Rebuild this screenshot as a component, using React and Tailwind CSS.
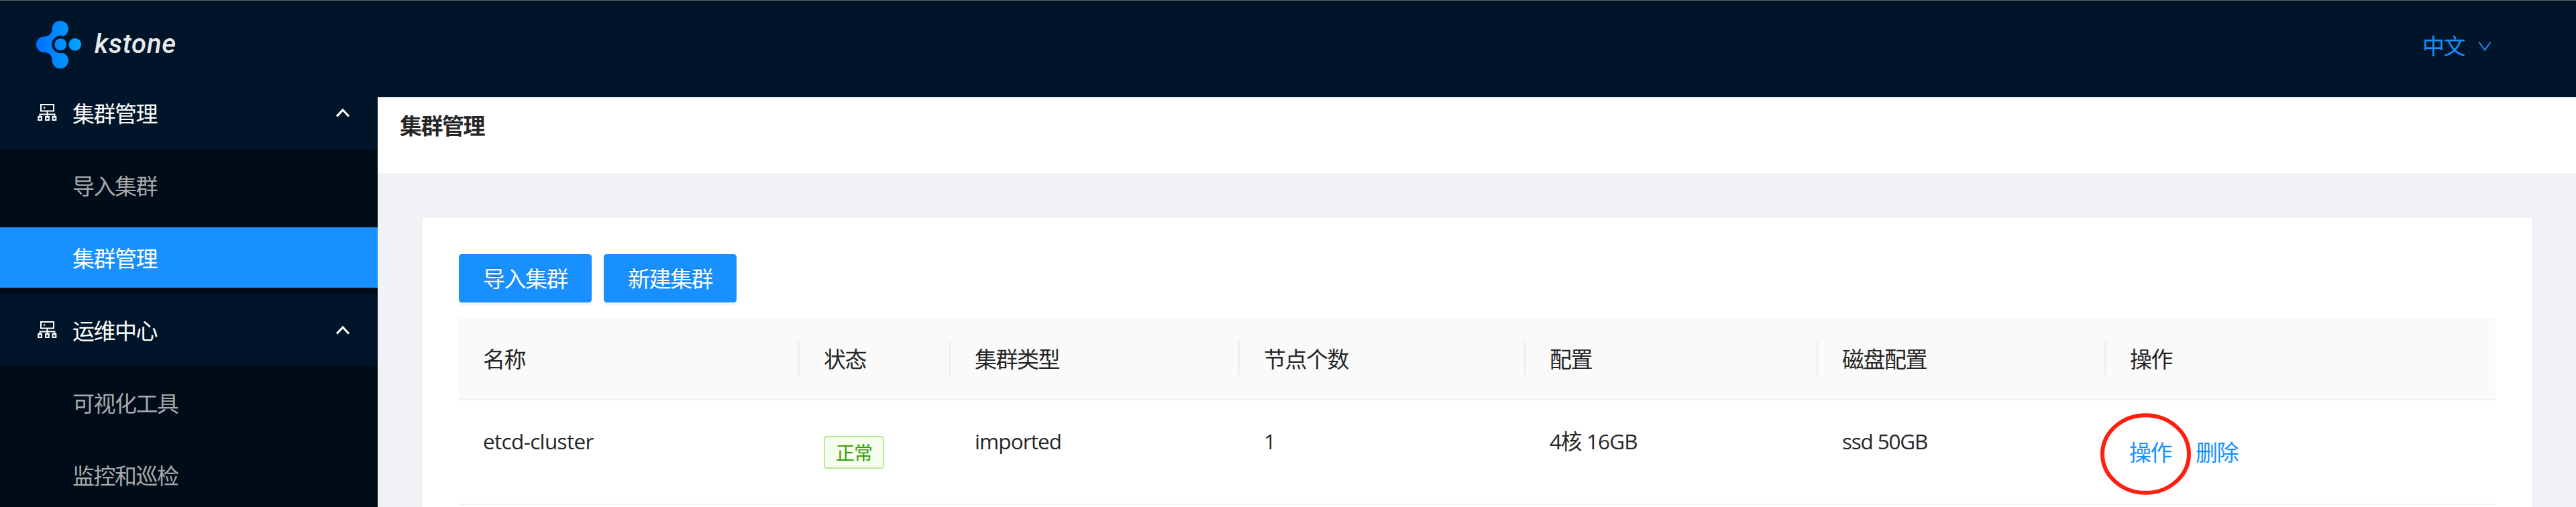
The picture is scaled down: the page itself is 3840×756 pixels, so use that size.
function Logo() {
  return (
    <div className="flex items-center">
      <svg width="72" height="74" viewBox="52 29 72 74">
        <defs>
          <linearGradient id="lg" gradientUnits="userSpaceOnUse" x1="53" y1="0" x2="122" y2="0">
            <stop offset="0" stopColor="#0070ff" />
            <stop offset="1" stopColor="#00a6ff" />
          </linearGradient>
          <mask id="ring">
            <rect x="50" y="29" width="74" height="74" fill="#fff" />
            <circle cx="90.3" cy="66.3" r="13" fill="#000" />
          </mask>
        </defs>
        <g fill="url(#lg)">
          <path
            mask="url(#ring)"
            d="M89.800 31a12 12 0 0 1 0 24Q87 55 90 66.300Q87 78 89.800 78.300a12 12 0 0 1 0 24c-7.500 0-12-5.500-12-13c0-6-4.500-11-12-11.200a11.800 11.800 0 0 1 0-23.600c7.500-.2 12-5.200 12-11.200c0-7 4.500-12.300 12-12.300z"
          />
          <circle cx="90.3" cy="66.3" r="9" />
          <circle cx="111.8" cy="66.3" r="9.300" />
        </g>
      </svg>
      <span className="ml-[17px] text-[40px] leading-none font-medium italic tracking-[0.8px] text-[#e9eaec] font-[Roboto,sans-serif]">
        kstone
      </span>
    </div>
  );
}

function ClusterIcon() {
  return (
    <svg width="32" height="32" viewBox="0 0 32 32" fill="none" stroke="currentColor" strokeWidth="2">
      <rect x="7" y="4" width="19" height="9.500" />
      <path d="M16.500 13.500V24M5.500 24V18.500H27.500V24" />
      <rect x="3.200" y="22" width="4.800" height="5" />
      <rect x="14.100" y="22" width="4.800" height="5" />
      <rect x="24.500" y="22" width="4.800" height="5" />
      <rect x="11" y="7.500" width="2.200" height="2.200" fill="currentColor" stroke="none" />
    </svg>
  );
}

function GroupTitle({ children, className }) {
  return (
    <div className={"flex items-center pl-[54px] pr-[41px] text-white " + className}>
      <ClusterIcon />
      <span className="ml-[22px] flex-1 pt-0.5">{children}</span>
      <svg width="22" height="14" viewBox="0 0 22 14" fill="none" stroke="currentColor" strokeWidth="3.2">
        <path d="M2 12.500L11 3L20 12.500" />
      </svg>
    </div>
  );
}

function Item({ active, children }) {
  return (
    <div className={"flex h-[90px] items-center pl-[108px] pt-[3px] " + (active ? "bg-[#1890ff] text-white" : "text-[#a6aaad]")}>
      {children}
    </div>
  );
}

function Head({ children, last }) {
  return (
    <div className="flex h-[121px] items-center justify-between bg-[#fafafa] pl-9">
      <span className="pt-0.5">{children}</span>
      {!last && <i className="h-[51px] w-0.5 bg-[#ededed]" />}
    </div>
  );
}

function Cell({ children, className }) {
  return <div className={"flex h-[154px] items-center pb-[33px] pl-9 text-[31.5px] whitespace-pre " + className}>{children}</div>;
}

export default function App() {
  return (
    <div className="flex h-[756px] w-[3840px] flex-col overflow-hidden bg-[#001529] text-[33px] leading-none tracking-[-1.5px] text-[#262626] font-['Open_Sans','Noto_Sans_CJK_SC',sans-serif]">
      <header className="flex h-[145px] shrink-0 items-start justify-between border-t border-[#5f6368] pl-[52px] pr-[125px] pt-[28px]">
        <Logo />
        <div className="flex items-center pt-[23px] text-[#1890ff]">
          中文
          <svg className="ml-[19px]" width="22" height="16" viewBox="0 0 22 16" fill="none" stroke="currentColor" strokeWidth="2">
            <path d="M2.500 2L11 13.500L19.500 2" />
          </svg>
        </div>
      </header>
      <div className="flex min-h-0 flex-1">
        <aside className="w-[563px] shrink-0 overflow-hidden">
          <GroupTitle className="h-[77px] pb-[31px]">集群管理</GroupTitle>
          <div className="flex flex-col gap-[18px] bg-[#000c17] py-[9px]">
            <Item>导入集群</Item>
            <Item active>集群管理</Item>
          </div>
          <GroupTitle className="h-[108px]">运维中心</GroupTitle>
          <div className="flex flex-col gap-[18px] bg-[#000c17] py-[9px]">
            <Item>可视化工具</Item>
            <Item>监控和巡检</Item>
          </div>
        </aside>
        <main className="flex flex-1 flex-col bg-[#f0f2f5]">
          <h1 className="h-[113px] bg-white pl-[33px] pt-[26px] font-bold">集群管理</h1>
          <section className="ml-[67px] mr-[66px] mt-[67px] flex-1 bg-white px-[54px] pt-[54px]">
            <div className="flex gap-[18px]">
              {["导入集群", "新建集群"].map((t) => (
                <button
                  key={t}
                  className="flex h-[72px] w-[198px] items-center justify-center rounded-[4.5px] bg-[#1890ff] pt-px text-white shadow-[0_4.5px_0_rgba(0,0,0,0.045)] [text-shadow:0_-2px_0_rgba(0,0,0,0.12)]"
                >
                  {t}
                </button>
              ))}
            </div>
            <div className="mt-[23px] overflow-hidden rounded-t-[4.5px]">
              <div className="grid grid-cols-[508px_225px_431px_426px_436px_429px_581px] border-b-2 border-[#f0f0f0]">
                <Head>名称</Head>
                <Head>状态</Head>
                <Head>集群类型</Head>
                <Head>节点个数</Head>
                <Head>配置</Head>
                <Head>磁盘配置</Head>
                <Head last>操作</Head>
              </div>
              <div className="grid grid-cols-[508px_225px_431px_426px_436px_429px_581px] border-b-2 border-[#f0f0f0]">
                <Cell className="tracking-[-0.65px]">etcd-cluster</Cell>
                <div className="pl-9 pt-[53px]">
                  <span className="flex h-[49px] w-[90px] items-center justify-center rounded-[4.5px] border-2 border-[#b7eb8f] bg-[#f6ffed] text-[28px] tracking-[-1px] text-[#389e0d]">
                    正常
                  </span>
                </div>
                <Cell className="tracking-[-0.9px]">imported</Cell>
                <Cell className="tracking-normal">1</Cell>
                <Cell className="tracking-[-0.9px]">4核 16GB</Cell>
                <Cell className="tracking-[-1.2px]">ssd 50GB</Cell>
                <div className="flex h-[154px] items-center gap-9 pl-[35px] pt-px text-[#1890ff]">
                  <a className="relative">
                    操作
                    <svg className="absolute -left-[44px] -top-[43px]" width="137" height="124" viewBox="0 0 137 124" fill="none">
                      <ellipse cx="68.500" cy="62" rx="64.500" ry="57.800" stroke="#ff1e10" strokeWidth="6" />
                    </svg>
                  </a>
                  <a>删除</a>
                </div>
              </div>
            </div>
          </section>
        </main>
      </div>
    </div>
  );
}
